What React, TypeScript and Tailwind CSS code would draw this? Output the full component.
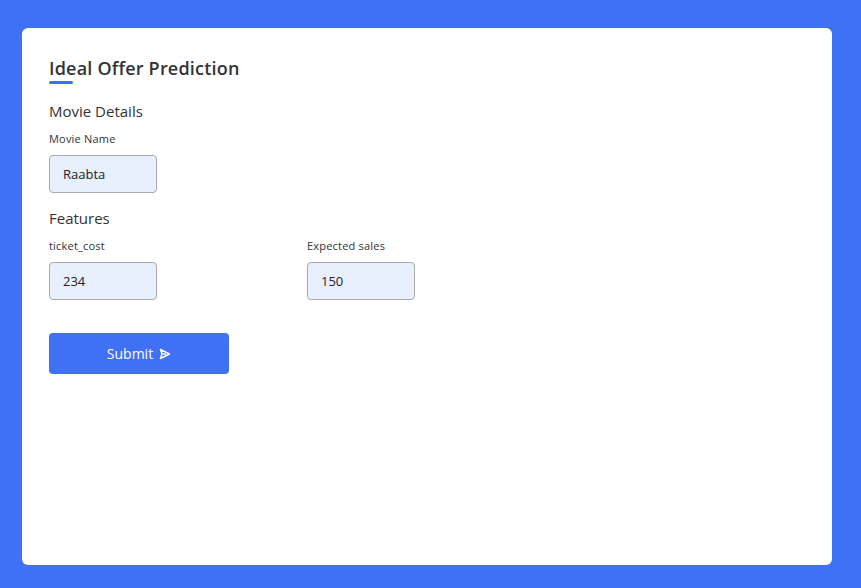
export default function App() {
  const font = { fontFamily: '"Open Sans", "Noto Sans", sans-serif' };
  return (
    <div
      className="min-h-[588px] w-full bg-[#4070f4] px-[22px] pt-[28px] pb-[23px]"
      style={font}
    >
      <div className="h-[537px] w-[810px] rounded-[6px] bg-white px-[27px] pt-[27px]">
        <div className="relative">
          <h1 className="text-[18px] leading-[26px] font-semibold tracking-[0.2px] text-[#333]">
            Ideal Offer Prediction
          </h1>
          <div className="h-[3px] w-[24px] rounded-full bg-[#4070f4]" />
        </div>

        <h2 className="mt-[16px] text-[15px] leading-[22px] font-medium text-[#333]">
          Movie Details
        </h2>
        <Field label="Movie Name" value="Raabta" />

        <h2 className="mt-[14px] text-[15px] leading-[22px] font-medium text-[#333]">
          Features
        </h2>
        <div className="flex gap-[150px]">
          <Field label="ticket_cost" value="234" />
          <Field label="Expected sales" value="150" />
        </div>

        <button
          type="button"
          className="mt-[33px] flex h-[41px] w-[180px] items-center justify-center gap-[6px] rounded-[4px] bg-[#4070f4] text-[14px] text-white"
        >
          Submit
          <svg width="12" height="12" viewBox="0 0 12 12" fill="none" stroke="white" strokeWidth="1.4" strokeLinejoin="round">
            <path d="M1.5 1.5 L10.5 6 L1.5 10.5 L3 6 Z" />
            <path d="M3 6 H7" />
          </svg>
        </button>
      </div>
    </div>
  );
}

function Field({ label, value }: { label: string; value: string }) {
  return (
    <div className="mt-[9px] flex flex-col">
      <label className="text-[11px] leading-[16px] font-medium tracking-[0.2px] text-[#333]">{label}</label>
      <input
        readOnly
        value={value}
        className="mt-[8px] h-[38px] w-[108px] rounded-[4px] border border-[#aaa] bg-[#e8f0fe] px-[13px] text-[13px] text-[#222] outline-none"
      />
    </div>
  );
}
